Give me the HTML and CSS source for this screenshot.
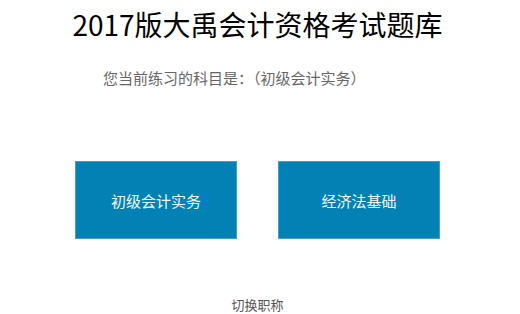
FILE: index.html
```html
<!DOCTYPE html>
<html lang="zh">
<head>
<meta charset="utf-8">
<link rel="stylesheet" href="styles.css">
</head>
<body>
<div class="page">
  <h1 class="title">2017版大禹会计资格考试题库</h1>
  <p class="current">您当前练习的科目是：（初级会计实务）</p>
  <div class="choices">
    <a class="choice">初级会计实务</a>
    <a class="choice">经济法基础</a>
  </div>
  <p class="switch">切换职称</p>
</div>
</body>
</html>
```

FILE: styles.css
```css
html, body {
  margin: 0;
  padding: 0;
  background: #ffffff;
}
.page {
  width: 515px;
  font-family: "Noto Sans CJK SC", "Liberation Sans", sans-serif;
}
.title {
  margin: 0;
  padding-top: 5px;
  height: 43px;
  font-size: 28px;
  font-weight: normal;
  line-height: 38px;
  color: #000;
  text-align: center;
}
.current {
  margin: 0;
  margin-top: 19px;
  padding-left: 103px;
  font-size: 15px;
  line-height: 22px;
  color: #666;
}
.choices {
  display: flex;
  gap: 41px;
  padding-left: 75px;
  margin-top: 72px;
}
.choice {
  box-sizing: border-box;
  width: 162px;
  height: 78px;
  background: #0282b4;
  border: 1px solid #3e9fc7;
  color: #f2f8fb;
  font-size: 15px;
  display: flex;
  align-items: center;
  justify-content: center;
}
.switch {
  margin: 0;
  margin-top: 57px;
  font-size: 13px;
  line-height: 18px;
  color: #555;
  text-align: center;
}
```
